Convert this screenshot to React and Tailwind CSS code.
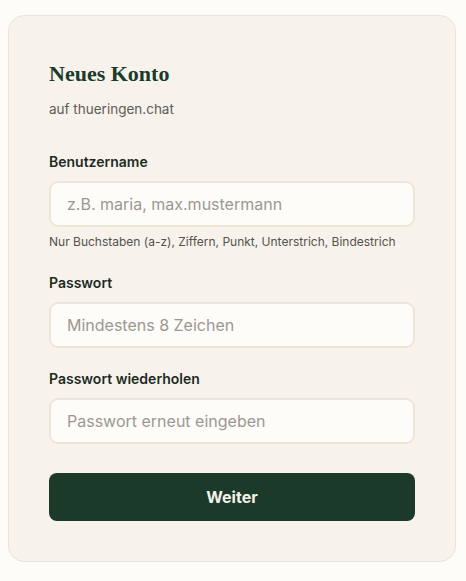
import React, { useState } from 'react'

const sans = { fontFamily: 'Inter, "Noto Sans", sans-serif' }

function Field({ label, placeholder, type = 'text', value, onChange, hint }) {
  return (
    <label className="flex flex-col">
      <span className="text-[14px] leading-5 font-semibold text-[#1d2b23]">{label}</span>
      <input
        type={type}
        value={value}
        onChange={e => onChange(e.target.value)}
        placeholder={placeholder}
        className="mt-[9px] h-[46px] w-full rounded-[9px] border-2 border-[#ede5d6] bg-[#fefcf8] px-4 text-[16px] text-[#1d2b23] placeholder:text-[#9b9892] outline-none"
      />
      {hint && <span className="mt-[7px] text-[12px] leading-4 text-[#55524c]">{hint}</span>}
    </label>
  )
}

export default function App() {
  const [user, setUser] = useState('')
  const [pw, setPw] = useState('')
  const [pw2, setPw2] = useState('')

  return (
    <div className="min-h-screen bg-[#fdfcf8] pt-[15px]" style={sans}>
      <div className="ml-2 w-[448px] rounded-2xl border border-[#ebe4d6] bg-[#f7f3ec] px-10 pt-[44px] pb-10">
        <h2 className="text-[22px] leading-7 font-bold text-[#1b3a2a]" style={{ fontFamily: '"Liberation Serif", serif' }}>
          Neues Konto
        </h2>
        <p className="mt-[11px] text-[13.5px] leading-5 text-[#5e5b55]">auf thueringen.chat</p>

        <div className="mt-[33px] flex flex-col">
          <Field
            label="Benutzername"
            placeholder="z.B. maria, max.mustermann"
            value={user}
            onChange={setUser}
            hint="Nur Buchstaben (a-z), Ziffern, Punkt, Unterstrich, Bindestrich"
          />
          <div className="mt-[23px]">
            <Field label="Passwort" type="password" placeholder="Mindestens 8 Zeichen" value={pw} onChange={setPw} />
          </div>
          <div className="mt-[21px]">
            <Field label="Passwort wiederholen" type="password" placeholder="Passwort erneut eingeben" value={pw2} onChange={setPw2} />
          </div>
          <button className="mt-[29px] h-12 w-full rounded-lg bg-[#1b3a2a] text-[16px] font-bold text-[#f4f1ea]">
            Weiter
          </button>
        </div>
      </div>
    </div>
  )
}
